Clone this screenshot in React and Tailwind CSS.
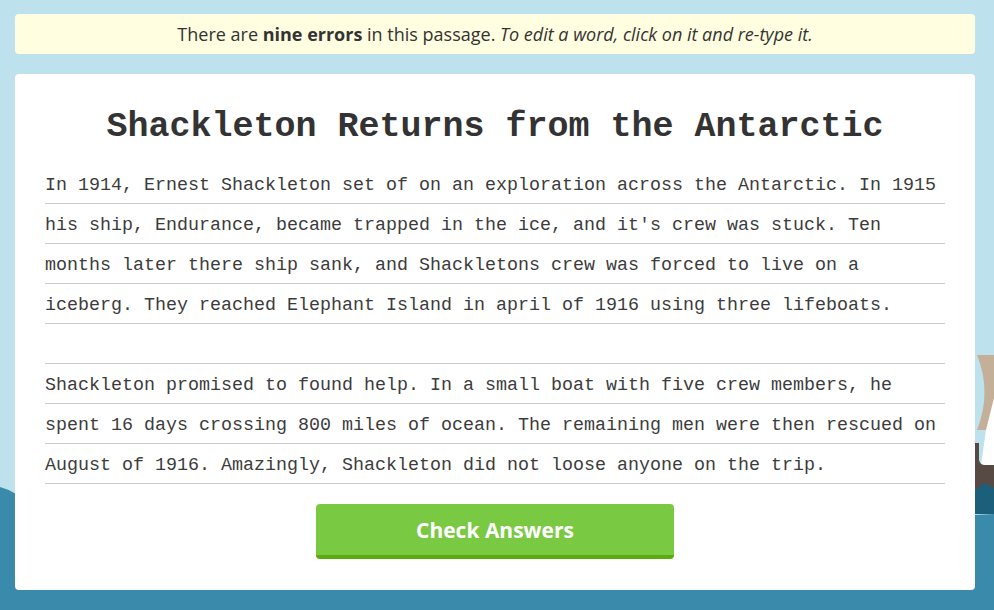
import React from 'react';

const lines = [
  'In 1914, Ernest Shackleton set of on an exploration across the Antarctic. In 1915',
  "his ship, Endurance, became trapped in the ice, and it's crew was stuck. Ten",
  'months later there ship sank, and Shackletons crew was forced to live on a',
  'iceberg. They reached Elephant Island in april of 1916 using three lifeboats.',
  '',
  'Shackleton promised to found help. In a small boat with five crew members, he',
  'spent 16 days crossing 800 miles of ocean. The remaining men were then rescued on',
  'August of 1916. Amazingly, Shackleton did not loose anyone on the trip.'
];

const mono = { fontFamily: '"Liberation Mono", "Courier New", monospace' };
const sans = { fontFamily: '"Open Sans", sans-serif' };

function Scenery() {
  return (
    <svg
      className="absolute inset-0"
      width="994"
      height="610"
      viewBox="0 0 994 610"
      aria-hidden="true"
    >
      {/* sea */}
      <path d="M0 487 Q8 489 16 494 L500 540 L994 514 L994 610 L0 610 Z" fill="#3a8aab" />
      {/* ship on the right */}
      <path d="M977 355 L994 355 L994 430 L977 430 Q992 392 977 355 Z" fill="#c4b098" />
      <path d="M986 430 L994 398 L994 470 L980 472 Z" fill="#ffffff" />
      <path d="M975 443 L979 443 L979 460 Q980 465 985 465 L994 465 L994 500 L975 500 Z" fill="#574a44" />
      <path d="M975 490 L985 483 L994 488 L994 514 L975 514 Z" fill="#1b5f7a" />
    </svg>
  );
}

export default function App() {
  return (
    <div className="relative h-[610px] w-full overflow-hidden bg-[#bde1ed]">
      <Scenery />
      <div className="relative flex w-[960px] flex-col gap-5 ml-[15px] pt-[14px]">
        <div
          className="flex h-10 items-center justify-center rounded bg-[#fffee0] text-[18px] text-[#333]"
          style={sans}
        >
          <span>
            There are <b className="font-bold">nine errors</b> in this passage.{' '}
            <i>To edit a word, click on it and re-type it.</i>
          </span>
        </div>

        <section className="flex flex-col items-center rounded bg-white px-[30px] pt-[32px] pb-[31px]">
          <h1
            className="mb-[16px] text-[35px] leading-[42px] font-bold text-[#333]"
            style={mono}
          >
            Shackleton Returns from the Antarctic
          </h1>

          <div className="w-full text-[18.33px] text-[#3c3c3c]" style={mono}>
            {lines.map((line, index) => (
              <div
                key={index}
                className="flex h-10 items-center border-b border-[#cccccc] pt-1 whitespace-pre"
              >
                {line}
              </div>
            ))}
          </div>

          <button
            type="button"
            className="mt-5 flex h-[55px] w-[358px] items-center justify-center rounded border-b-4 border-[#5aab0c] bg-[#7ac943] pt-[2px] text-[21px] font-bold text-white"
            style={sans}
          >
            Check Answers
          </button>
        </section>
      </div>
    </div>
  );
}
